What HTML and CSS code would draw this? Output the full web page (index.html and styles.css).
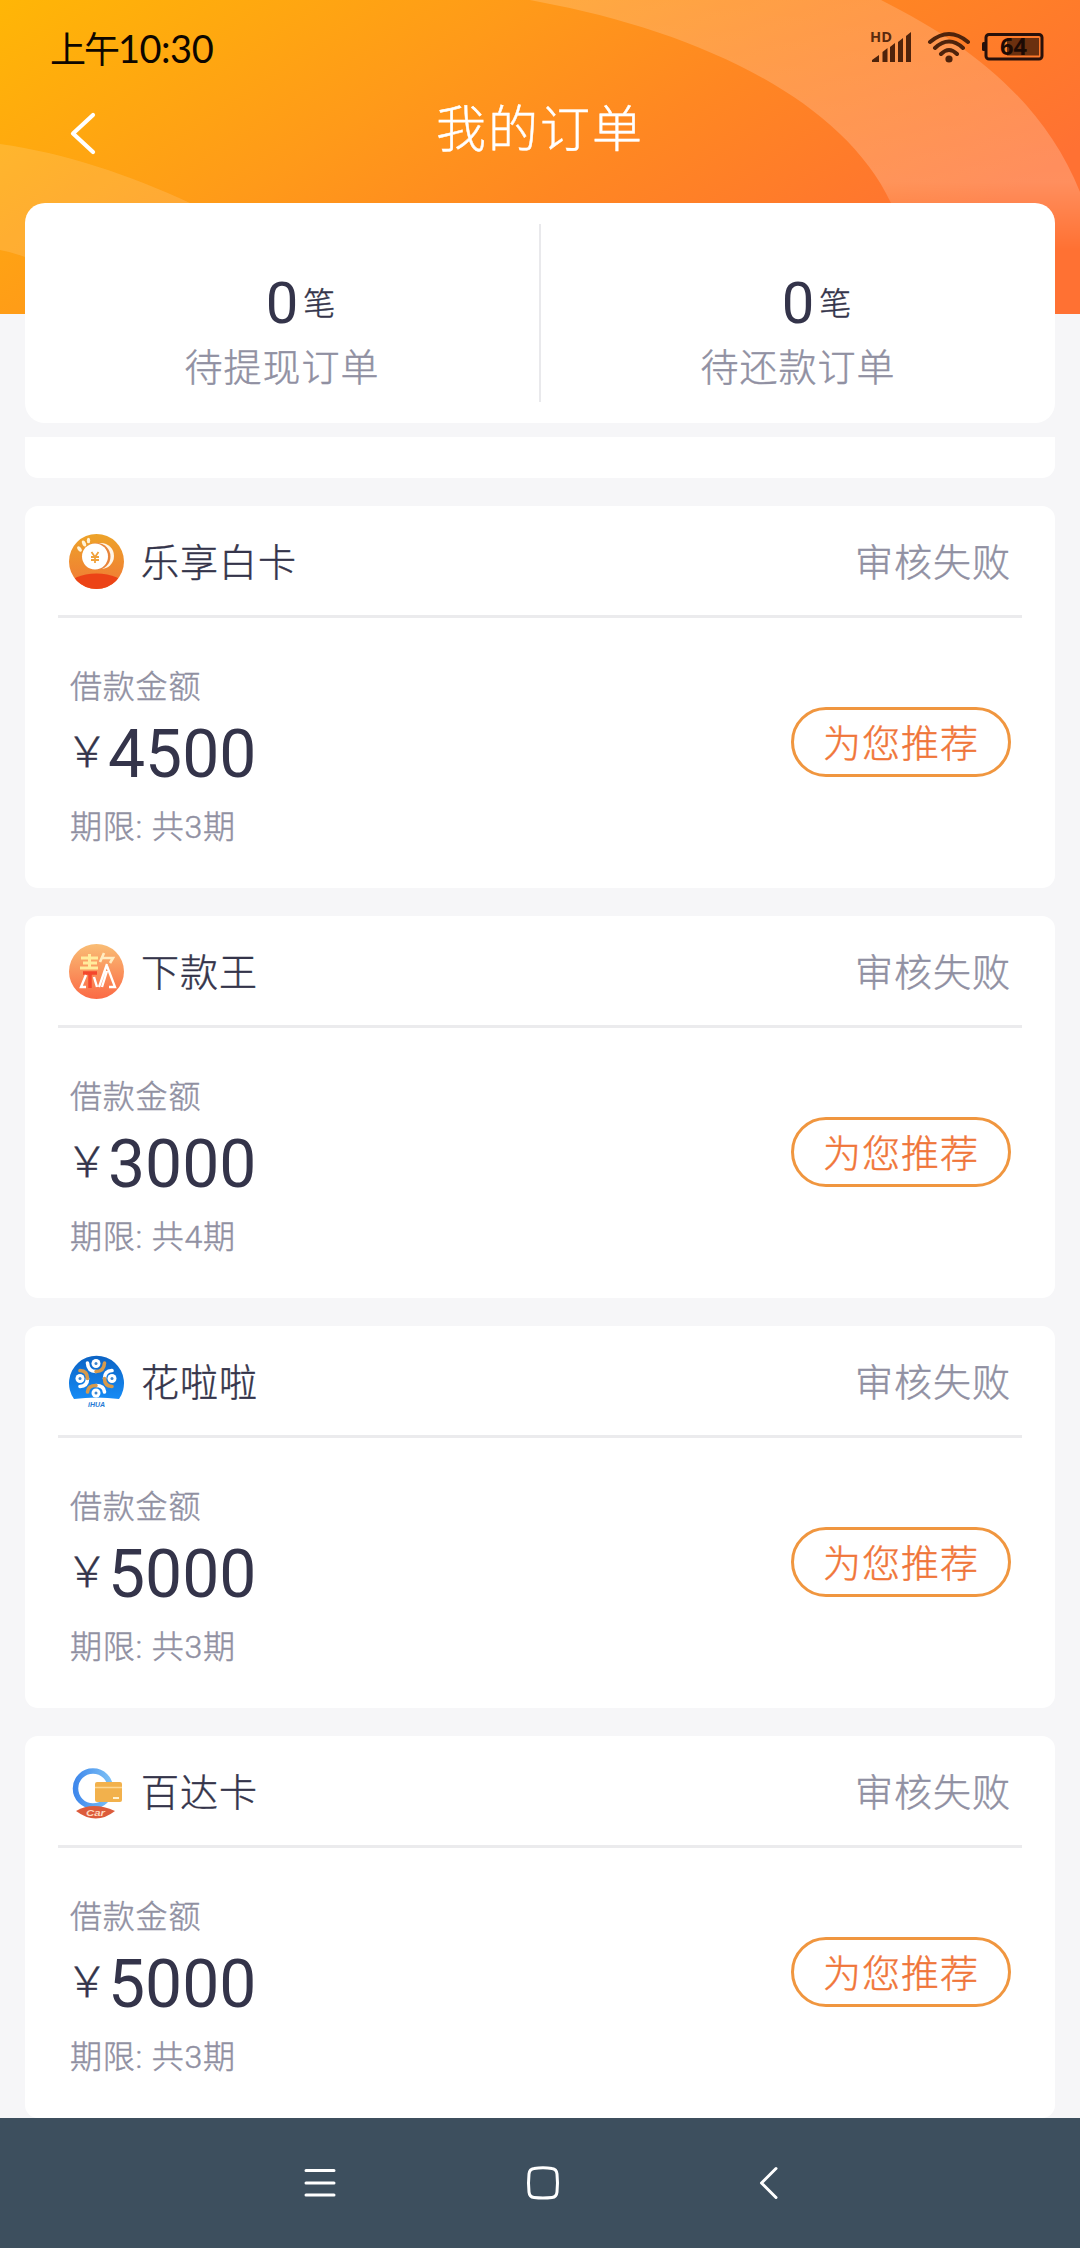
FILE: index.html
```html
<!DOCTYPE html>
<html lang="zh-CN">
<head>
<meta charset="utf-8">
<title>我的订单</title>
<link rel="stylesheet" href="styles.css">
</head>
<body>
<header class="header">
  <svg class="header-bg" viewBox="0 0 1080 314" aria-hidden="true">
    <defs>
      <linearGradient id="sky" gradientUnits="userSpaceOnUse" x1="0" y1="0" x2="400" y2="600">
        <stop offset="0" stop-color="#ffb606"/><stop offset=".41" stop-color="#ff9a19"/><stop offset=".65" stop-color="#ff8722"/><stop offset=".85" stop-color="#ff7a2b"/><stop offset="1" stop-color="#ff7133"/>
      </linearGradient>
      <linearGradient id="band" x1="0" y1="0" x2="0" y2="1">
        <stop offset="0" stop-color="#fff" stop-opacity=".17"/><stop offset=".7" stop-color="#fff" stop-opacity=".21"/><stop offset=".96" stop-color="#fff" stop-opacity="0"/>
      </linearGradient>
    </defs>
    <rect width="1080" height="314" fill="url(#sky)"/>
    <path d="M540 2C690 30 840 95 891 203V260H1080V192C1045 105 975 47 881 0H530Z" fill="url(#band)"/>
    <path d="M0 144C65 153 130 175 190 203V300L25 257Q12 252 0 250Z" fill="#fff" fill-opacity=".13"/>
  </svg>
  <div class="status">
    <span class="time">上午<span class="clock">10:30</span></span>
    <svg class="status-icons" width="178" height="40" viewBox="0 0 178 40" aria-hidden="true">
      <text class="hd" x="0" y="16" textLength="22" lengthAdjust="spacingAndGlyphs">HD</text>
      <g fill="#4f230b">
        <path d="M2 36V34L9 29V36ZM12.500 36V26L17.500 22V36ZM20 36V21L25 17V36ZM28 36V16L33 12V36ZM36 36V10L41 6V36Z"/>
        <circle cx="79" cy="33" r="3.6"/>
      </g>
      <g fill="none" stroke="#4f230b" stroke-width="4" stroke-linecap="round">
        <path d="M60 16Q79 0 98 16M65 22Q79 9 93 22M71 28Q79 20 87 28"/>
      </g>
      <rect x="116" y="8.500" width="56" height="24.500" rx="3" fill="none" stroke="#28100a" stroke-width="3"/>
      <rect x="112" y="16" width="4" height="9" rx="1.5" fill="#28100a"/>
      <rect x="137" y="12" width="32" height="17.500" fill="#6b300f"/>
      <text class="level" x="130" y="29" textLength="27" lengthAdjust="spacingAndGlyphs">64</text>
    </svg>
  </div>
  <div class="titlebar">
    <svg class="back" width="30" height="44" viewBox="0 0 30 44" aria-hidden="true"><path d="M26 4L6 22.500L26 41" fill="none" stroke="#fff" stroke-width="4.200" stroke-linecap="round" stroke-linejoin="round"/></svg>
    <h1>我的订单</h1>
  </div>
</header>

<section class="summary">
  <div class="stat"><p class="count"><b>0</b><span>笔</span></p><p class="caption">待提现订单</p></div>
  <i class="split"></i>
  <div class="stat"><p class="count"><b>0</b><span>笔</span></p><p class="caption">待还款订单</p></div>
</section>

<main class="list">
  <div class="card card-tail"></div>

  <article class="card">
    <div class="card-head">
      <svg class="logo" viewBox="0 0 55 55" aria-hidden="true">
        <defs><linearGradient id="a1" x2="0" y2="1"><stop stop-color="#eda329"/><stop offset="1" stop-color="#f17836"/></linearGradient><clipPath id="c1"><circle cx="27.500" cy="27.500" r="27.500"/></clipPath></defs>
        <g clip-path="url(#c1)"><rect width="55" height="55" fill="url(#a1)"/><ellipse cx="27.500" cy="52" rx="28" ry="12.500" fill="#ec4316"/>
        <circle cx="32" cy="22" r="13" fill="#fff6e8"/><circle cx="28" cy="22.500" r="13.500" fill="#e8843a"/><circle cx="26" cy="22.500" r="13" fill="#fff"/></g>
        <g fill="#fff4d8"><ellipse cx="10.500" cy="15" rx="1.800" ry="3" transform="rotate(-35 10.500 15)"/><ellipse cx="15" cy="9.500" rx="1.800" ry="3.200" transform="rotate(-25 15 9.500)"/><ellipse cx="19.500" cy="6.500" rx="1.700" ry="2.800"/></g>
        <path d="M22.500 18L26 23L29.500 18M26 23V29M22 23H30M22 26H30" fill="none" stroke="#f0a23c" stroke-width="1.800"/>
      </svg>
      <h2>乐享白卡</h2><span class="state">审核失败</span>
    </div>
    <div class="card-body">
      <div class="info"><p class="label">借款金额</p><p class="amount"><span class="yen">￥</span>4500</p><p class="label term">期限: 共3期</p></div>
      <button class="pill">为您推荐</button>
    </div>
  </article>

  <article class="card">
    <div class="card-head">
      <svg class="logo" viewBox="0 0 55 55" aria-hidden="true">
        <defs><linearGradient id="a2" x2="0" y2="1"><stop stop-color="#f9bd75"/><stop offset="1" stop-color="#fb6a45"/></linearGradient></defs>
        <circle cx="27.500" cy="27.500" r="27.500" fill="url(#a2)"/>
        <path d="M12 14H29M20.500 10V24M14 19H28M11 24H29" stroke="#ffec9c" stroke-width="3" fill="none"/>
        <path d="M14 29H28M21 29V44" stroke="#f4472c" stroke-width="3.500" fill="none"/>
        <path d="M17 31L12 43H17M25 33L28 43" stroke="#fff" stroke-width="2.400" fill="none"/>
        <path d="M35 9L31 18M33 14H44L41 19" stroke="#ffecc0" stroke-width="2.600" fill="none"/>
        <path d="M38 20L30 43M38 27L33 43M38 22L46 43H40" stroke="#fff" stroke-width="2.300" fill="none"/>
      </svg>
      <h2>下款王</h2><span class="state">审核失败</span>
    </div>
    <div class="card-body">
      <div class="info"><p class="label">借款金额</p><p class="amount"><span class="yen">￥</span>3000</p><p class="label term">期限: 共4期</p></div>
      <button class="pill">为您推荐</button>
    </div>
  </article>

  <article class="card">
    <div class="card-head">
      <svg class="logo" viewBox="0 0 55 55" aria-hidden="true">
        <defs><linearGradient id="a3" x2="0" y2="1"><stop stop-color="#0c63c4"/><stop offset="1" stop-color="#168bf5"/></linearGradient></defs>
        <path d="M5 45A27.500 27.500 0 1 1 50 45Q27.500 42 5 45Z" fill="url(#a3)"/>
        <g fill="none" stroke-width="3.600" stroke-linecap="round">
          <g stroke="#fff"><path d="M18.500 9Q19 17.500 27 17.500"/><path d="M11 32.500Q18.500 32 18.500 24.500"/><path d="M27 31.500Q35 31.500 35.500 38"/><path d="M35.500 24.500Q35.500 17 43 16.500"/></g>
          <g stroke="#d69a4c"><path d="M27 17.500Q35 17.500 35.500 9"/><path d="M11 16.500Q18.500 17 18.500 24.500"/><path d="M18.500 38Q19 31.500 27 31.500"/><path d="M35.500 24.500Q35.500 32 43 32.500"/></g>
        </g>
        <g fill="#fff"><circle cx="27" cy="9.500" r="4.500"/><circle cx="11" cy="24.500" r="4.500"/><circle cx="43" cy="24.500" r="4.500"/><circle cx="27" cy="39" r="4.500"/></g>
        <g fill="#3e85ce"><circle cx="27" cy="9.500" r="1.500"/><circle cx="11" cy="24.500" r="1.500"/><circle cx="43" cy="24.500" r="1.500"/><circle cx="27" cy="39" r="1.500"/></g>
        <text class="logo-text blue" x="19" y="53" textLength="17" lengthAdjust="spacingAndGlyphs">iHUA</text>
      </svg>
      <h2>花啦啦</h2><span class="state">审核失败</span>
    </div>
    <div class="card-body">
      <div class="info"><p class="label">借款金额</p><p class="amount"><span class="yen">￥</span>5000</p><p class="label term">期限: 共3期</p></div>
      <button class="pill">为您推荐</button>
    </div>
  </article>

  <article class="card">
    <div class="card-head">
      <svg class="logo" viewBox="0 0 55 55" aria-hidden="true">
        <defs><linearGradient id="a4"><stop stop-color="#4089ec"/><stop offset="1" stop-color="#7cc0f5"/></linearGradient></defs>
        <circle cx="24" cy="24.500" r="17.500" fill="none" stroke="url(#a4)" stroke-width="5.500"/>
        <path d="M7 47Q24 37 46 47Q27 62 7 47Z" fill="#dc5b3b"/>
        <rect x="26" y="18" width="27" height="20" rx="2" fill="#f2b14c"/><path d="M26 23.500H53" stroke="#ffd893" stroke-width="1.500"/><rect x="44" y="33" width="6" height="2" fill="#fff1d0"/>
        <text class="logo-text pale" x="17" y="52" textLength="19" lengthAdjust="spacingAndGlyphs">Car</text>
      </svg>
      <h2>百达卡</h2><span class="state">审核失败</span>
    </div>
    <div class="card-body">
      <div class="info"><p class="label">借款金额</p><p class="amount"><span class="yen">￥</span>5000</p><p class="label term">期限: 共3期</p></div>
      <button class="pill">为您推荐</button>
    </div>
  </article>
</main>

<nav class="navbar">
  <svg width="36" height="36" viewBox="0 0 36 36" aria-hidden="true"><path d="M4 5.500H32M4 18H32M4 30H32" stroke="#fff" stroke-width="3" stroke-linecap="round"/></svg>
  <svg width="36" height="36" viewBox="0 0 36 36" aria-hidden="true"><path d="M8 3.500Q17 2 26 3.500Q30.500 4 31 9Q32 18 31 27Q30.500 32 26 32.500Q17 33.500 8 32.500Q3.500 32 3 27Q2 18 3 9Q3.500 4 8 3.500Z" fill="none" stroke="#fff" stroke-width="3"/></svg>
  <svg width="36" height="36" viewBox="0 0 36 36" aria-hidden="true"><path d="M26 3.500L11.500 18L26 32.500" fill="none" stroke="#fff" stroke-width="3" stroke-linecap="round" stroke-linejoin="round"/></svg>
</nav>
</body>
</html>
```
FILE: styles.css
```css
* { box-sizing: border-box; margin: 0; padding: 0; }

body {
  display: flex;
  flex-direction: column;
  height: 2248px;
  overflow: hidden;
  background: #f6f6f8;
  color: #34344a;
  font-family: Roboto, "Noto Sans CJK SC", sans-serif;
  font-weight: 300;
}

.header {
  position: relative;
  flex: none;
  height: 314px;
}

.header-bg {
  position: absolute;
  inset: 0;
  z-index: -1;
  width: 1080px;
  height: 314px;
}

.status {
  display: flex;
  justify-content: space-between;
  align-items: center;
  height: 97px;
  padding: 0 32px 0 50px;
  color: #0d0600;
}

.time { margin-top: 2px; font-size: 36px; line-height: 60px; font-weight: 400; letter-spacing: -2px; }
.clock { font-family: Lato, sans-serif; font-size: 38px; letter-spacing: -.5px; }
.status-icons { margin-bottom: 5px; }
.hd { font: 700 15px "Open Sans", sans-serif; fill: #5b2a0e; }
.level { font: 700 23px "Open Sans", sans-serif; fill: #1c0a04; }

.titlebar {
  display: grid;
  grid-template-columns: 120px 1fr 120px;
  align-items: center;
  height: 64px;
}

.back { margin: 7px 0 0 67px; }

h1, h2, .state, .caption, .label, .count span, .yen, .pill { -webkit-text-stroke: .45px currentColor; }

h1 {
  padding-top: 1px;
  color: #fff;
  font-size: 50px;
  font-weight: 300;
  line-height: 64px;
  letter-spacing: 2px;
  text-align: center;
}

.summary {
  position: relative;
  display: flex;
  align-items: flex-start;
  flex: none;
  height: 220px;
  margin: -111px 25px 14px;
  border-radius: 20px;
  background: #fff;
}

.stat { flex: 1; padding-top: 64px; text-align: center; }
.split { width: 2px; height: 178px; margin-top: 21px; background: #e9e9ec; }
.count { display: flex; justify-content: center; align-items: center; gap: 5px; height: 72px; padding-left: 37px; }
.count b { font-size: 58px; font-weight: 400; line-height: 72px; }
.count span { margin-top: 2px; font-size: 32px; line-height: 48px; }
.caption { margin-top: 1px; color: #9090a2; font-size: 38px; line-height: 56px; letter-spacing: 1px; }

.list {
  display: flex;
  flex: 1;
  flex-direction: column;
  gap: 28px;
  min-height: 0;
  overflow: hidden;
  padding: 0 25px;
}

.card {
  flex: none;
  height: 382px;
  padding: 0 33px;
  border-radius: 13px;
  background: #fff;
}

.card-tail { height: 41px; border-radius: 0 0 13px 13px; }

.card-head {
  display: flex;
  align-items: center;
  height: 112px;
  padding: 0 11px;
  border-bottom: 3px solid #ebebed;
}

.logo { width: 55px; height: 55px; margin-top: 2px; }
.logo-text { font: italic 700 7px "Liberation Sans", sans-serif; }
.blue { fill: #2479d5; }
.pale { font-size: 9px; fill: #ffd6bc; }
h2, .state { padding-top: 4px; font-size: 38px; font-weight: 300; line-height: 56px; letter-spacing: 1px; }
h2 { margin-left: 17px; }
.state { margin-left: auto; color: #9090a2; }

.card-body {
  display: flex;
  justify-content: space-between;
  align-items: flex-start;
  padding: 45px 11px 0 12px;
}

.label { color: #9090a2; font-size: 32px; line-height: 48px; letter-spacing: .8px; }
.amount { display: flex; align-items: center; height: 84px; padding-top: 4px; font-size: 66px; font-weight: 400; line-height: 80px; }
.yen { width: 42px; margin: -13px 0 0 -4px; font: 300 42px/50px "Noto Sans CJK SC", sans-serif; }
.term { margin-top: 8px; }

.pill {
  width: 220px;
  height: 70px;
  margin-top: 44px;
  padding-top: 3px;
  border: 3px solid #f0963f;
  border-radius: 35px;
  background: #fff;
  color: #f0763a;
  font: 300 38px/56px Roboto, "Noto Sans CJK SC", sans-serif;
  letter-spacing: 1px;
}

.navbar {
  display: flex;
  flex: none;
  justify-content: space-between;
  height: 130px;
  padding: 47px 294px 0 302px;
  background: #3d4f5e;
}
```
